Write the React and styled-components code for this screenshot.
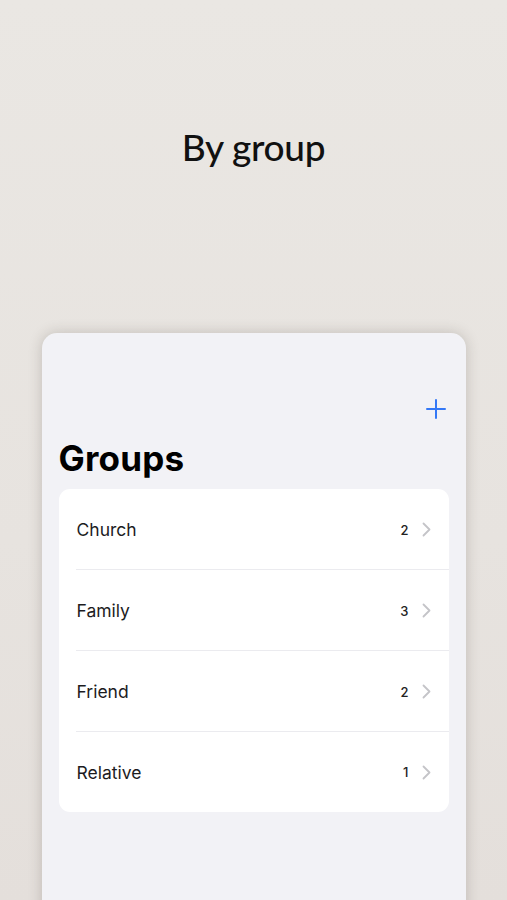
import React from "react";
import styled, { createGlobalStyle } from "styled-components";

const Global = createGlobalStyle`
  html, body { margin: 0; padding: 0; }
  body {
    background: #e8e5e1;
    overflow: hidden;
    -webkit-font-smoothing: antialiased;
  }
`;

const Page = styled.div`
  width: 507px;
  height: 900px;
  overflow: hidden;
  background: linear-gradient(180deg, #eae7e3 0%, #e7e3df 60%, #e4dfdb 100%);
  display: flex;
  flex-direction: column;
  align-items: center;
`;

const Hero = styled.h1`
  margin: 122px 0 0;
  height: 50px;
  line-height: 50px;
  font-family: Lato, "Open Sans", sans-serif;
  font-weight: 500;
  font-size: 37px;
  color: #111;
  letter-spacing: -0.3px;
`;

const Phone = styled.div`
  margin-top: 161px;
  width: 424px;
  height: 620px;
  flex-shrink: 0;
  box-sizing: border-box;
  padding: 0 17px;
  background: #f2f2f6;
  border-radius: 15px 15px 0 0;
  box-shadow: 0 0 14px rgba(60, 50, 40, 0.22);
  display: flex;
  flex-direction: column;
  font-family: Inter, "Noto Sans", sans-serif;
`;

const Toolbar = styled.div`
  margin-top: 58px;
  height: 36px;
  display: flex;
  align-items: center;
  justify-content: flex-end;
  padding-right: 3px;
`;

const AddButton = styled.button`
  border: 0;
  background: none;
  padding: 0;
  width: 20px;
  height: 20px;
  display: flex;
  align-items: center;
  justify-content: center;
  color: #3478f6;
`;

const Title = styled.h2`
  margin: 11px 0 10px;
  line-height: 41px;
  font-size: 35px;
  font-weight: 700;
  color: #000;
  letter-spacing: 0.2px;
`;

const List = styled.div`
  background: #fff;
  border-radius: 11px;
  overflow: hidden;
`;

const Row = styled.div`
  position: relative;
  height: ${(p) => (p.$last ? 80 : 81)}px;
  display: flex;
  align-items: center;
  padding: 0 18px;
  &::after {
    content: "";
    display: ${(p) => (p.$last ? "none" : "block")};
    position: absolute;
    left: 17px;
    right: 0;
    bottom: 0;
    height: 1px;
    background: #ebebef;
  }
`;

const Label = styled.span`
  flex: 1;
  font-size: 17.5px;
  color: #1c1c1e;
`;

const Count = styled.span`
  font-size: 13px;
  font-weight: 500;
  color: #222;
  margin-right: 13px;
`;

const Chevron = () => (
  <svg width="9" height="15" viewBox="0 0 9 15" fill="none">
    <path d="M1.5 1.5 L7.5 7.5 L1.5 13.5" stroke="#c4c4c8" strokeWidth="1.8" strokeLinecap="round" strokeLinejoin="round" />
  </svg>
);

const groups = [
  { name: "Church", count: 2 },
  { name: "Family", count: 3 },
  { name: "Friend", count: 2 },
  { name: "Relative", count: 1 },
];

export default function App() {
  return (
    <>
      <Global />
      <Page>
        <Hero>By group</Hero>
        <Phone>
          <Toolbar>
            <AddButton aria-label="Add">
              <svg width="20" height="20" viewBox="0 0 20 20">
                <path d="M10 1 V19 M1 10 H19" stroke="currentColor" strokeWidth="2" strokeLinecap="round" />
              </svg>
            </AddButton>
          </Toolbar>
          <Title>Groups</Title>
          <List>
            {groups.map((g, i) => (
              <Row key={g.name} $last={i === groups.length - 1}>
                <Label>{g.name}</Label>
                <Count>{g.count}</Count>
                <Chevron />
              </Row>
            ))}
          </List>
        </Phone>
      </Page>
    </>
  );
}
